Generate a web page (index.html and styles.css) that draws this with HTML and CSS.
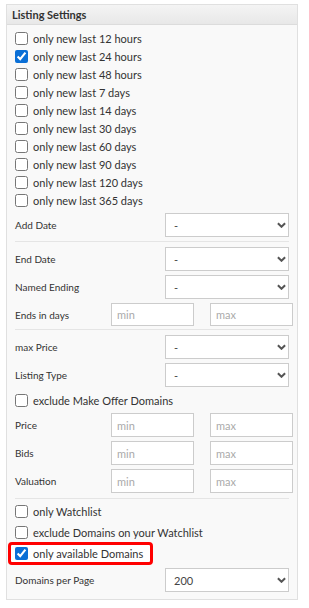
FILE: index.html
```html
<!DOCTYPE html>
<html lang="en">
<head>
    <meta charset="UTF-8">
    <meta name="viewport" content="width=device-width, initial-scale=1.0">
    <title>Listing Settings</title>
    <link rel="stylesheet" href="styles.css">
</head>
<body>

    <div class="panel">
        <div class="panel-head">Listing Settings</div>
        <div class="panel-body">

            <div class="checks">
                <label class="check"><input type="checkbox"> only new last 12 hours</label>
                <label class="check"><input type="checkbox" checked> only new last 24 hours</label>
                <label class="check"><input type="checkbox"> only new last 48 hours</label>
                <label class="check"><input type="checkbox"> only new last 7 days</label>
                <label class="check"><input type="checkbox"> only new last 14 days</label>
                <label class="check"><input type="checkbox"> only new last 30 days</label>
                <label class="check"><input type="checkbox"> only new last 60 days</label>
                <label class="check"><input type="checkbox"> only new last 90 days</label>
                <label class="check"><input type="checkbox"> only new last 120 days</label>
                <label class="check"><input type="checkbox"> only new last 365 days</label>
            </div>

            <div class="field">
                <span class="field-label">Add Date</span>
                <div class="select-wrap">
                    <select><option>-</option></select>
                    <svg class="chevron" viewBox="0 0 10 6"><path d="M1 1l4 4 4-4" /></svg>
                </div>
            </div>

            <hr class="sep">

            <div class="field field-first">
                <span class="field-label">End Date</span>
                <div class="select-wrap">
                    <select><option>-</option></select>
                    <svg class="chevron" viewBox="0 0 10 6"><path d="M1 1l4 4 4-4" /></svg>
                </div>
            </div>
            <div class="field">
                <span class="field-label">Named Ending</span>
                <div class="select-wrap">
                    <select><option>-</option></select>
                    <svg class="chevron" viewBox="0 0 10 6"><path d="M1 1l4 4 4-4" /></svg>
                </div>
            </div>
            <div class="range range-short">
                <span class="field-label">Ends in days</span>
                <input type="text" placeholder="min">
                <input type="text" placeholder="max">
            </div>

            <hr class="sep sep-tight">

            <div class="field field-first">
                <span class="field-label">max Price</span>
                <div class="select-wrap">
                    <select><option>-</option></select>
                    <svg class="chevron" viewBox="0 0 10 6"><path d="M1 1l4 4 4-4" /></svg>
                </div>
            </div>
            <div class="field">
                <span class="field-label">Listing Type</span>
                <div class="select-wrap">
                    <select><option>-</option></select>
                    <svg class="chevron" viewBox="0 0 10 6"><path d="M1 1l4 4 4-4" /></svg>
                </div>
            </div>

            <label class="check check-offer"><input type="checkbox"> exclude Make Offer Domains</label>

            <div class="range">
                <span class="field-label">Price</span>
                <input type="text" placeholder="min">
                <input type="text" placeholder="max">
            </div>
            <div class="range">
                <span class="field-label">Bids</span>
                <input type="text" placeholder="min">
                <input type="text" placeholder="max">
            </div>
            <div class="range">
                <span class="field-label">Valuation</span>
                <input type="text" placeholder="min">
                <input type="text" placeholder="max">
            </div>

            <hr class="sep sep-last">

            <label class="check"><input type="checkbox"> only Watchlist</label>
            <label class="check check-loose"><input type="checkbox"> exclude Domains on your Watchlist</label>
            <label class="check check-marked"><input type="checkbox" checked> only available Domains</label>

            <div class="field field-end">
                <span class="field-label">Domains per Page</span>
                <div class="select-wrap">
                    <select><option>200</option></select>
                    <svg class="chevron" viewBox="0 0 10 6"><path d="M1 1l4 4 4-4" /></svg>
                </div>
            </div>

        </div>
    </div>

</body>
</html>
```

FILE: styles.css
```css
body {
    margin: 0;
    background-color: #fff;
    font-family: 'Segoe UI', Lato, sans-serif;
    font-size: 11px;
    color: #333;
}

.panel {
    width: 290px;
    margin: 4px 0 0 6px;
    border: 1px solid #e0e0e0;
    background-color: #f9f9f9;
}

.panel-head {
    height: 19px;
    line-height: 19px;
    padding-left: 5px;
    font-weight: bold;
    font-size: 11px;
    color: #333;
    background: linear-gradient(#f4f4f4, #e8e8e8);
    border-bottom: 1px solid #dcdcdc;
}

.panel-body {
    padding: 4px 8px 7px 8px;
}

/* checkbox rows */
.check {
    display: flex;
    align-items: center;
    height: 18px;
    font-size: 11px;
    color: #333;
    white-space: nowrap;
}

.check input {
    width: 13px;
    height: 13px;
    margin: 0 5px 0 0;
    accent-color: #0a6fd6;
}

.check-offer {
    margin-top: 4px;
}

.check-loose {
    height: 20px;
    margin-top: 2px;
}

.check-marked {
    width: fit-content;
    height: 17px;
    margin: 0 0 0 -7px;
    padding: 0 7px 0 4px;
    border: 3px solid #f00;
    border-radius: 4px;
    background-color: #fff;
}

/* label + select */
.field {
    display: grid;
    grid-template-columns: 1fr 124px;
    align-items: center;
    margin-top: 4px;
}

.field-first {
    margin-top: 0;
}

.field-end {
    margin-top: 3px;
}

.field-label {
    font-size: 10px;
    color: #333;
}

.select-wrap {
    display: grid;
    align-items: center;
}

.select-wrap select,
.select-wrap .chevron {
    grid-area: 1 / 1;
}

.select-wrap select {
    appearance: none;
    width: 100%;
    height: 24px;
    margin: 0;
    padding: 0 0 0 8px;
    border: 1px solid #ccc;
    border-radius: 0;
    background-color: #fff;
    font-family: inherit;
    font-size: 11px;
    color: #444;
}

.chevron {
    justify-self: end;
    width: 9px;
    height: 6px;
    margin-right: 3px;
    fill: none;
    stroke: #555;
    stroke-width: 2.2;
    pointer-events: none;
}

/* label + min / max */
.range {
    display: grid;
    grid-template-columns: 80px 83px 83px;
    column-gap: 16px;
    align-items: center;
    margin-top: 4px;
}

.range input {
    box-sizing: border-box;
    width: 83px;
    height: 24px;
    margin: 0;
    padding: 0 5px;
    border: 1px solid #ccc;
    background-color: #fff;
    font-family: inherit;
    font-size: 11px;
}

.range-short input {
    height: 23px;
}

.range input::placeholder {
    color: #aaa;
}

.sep {
    height: 0;
    margin: 4px 0 5px 0;
    border: 0;
    border-top: 1px solid #e5e5e5;
}

.sep-tight {
    margin-top: 3px;
}

.sep-last {
    margin: 5px 0 3px 0;
}
```
